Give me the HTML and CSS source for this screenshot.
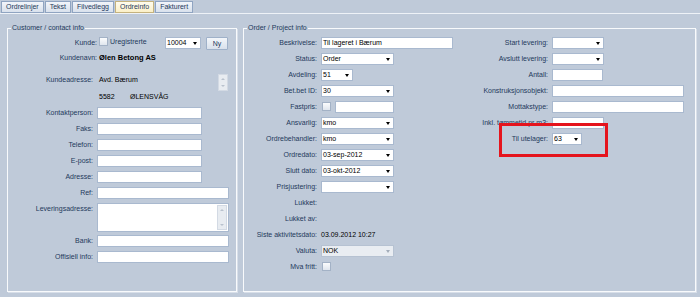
FILE: index.html
```html
<!DOCTYPE html>
<html lang="no">
<head>
    <meta charset="UTF-8">
    <title>Ordreinfo</title>
    <link rel="stylesheet" href="styles.css">
</head>
<body>

    <div class="tabs">
        <span class="tab">Ordrelinjer</span>
        <span class="tab">Tekst</span>
        <span class="tab">Filvedlegg</span>
        <span class="tab active">Ordreinfo</span>
        <span class="tab">Fakturert</span>
    </div>

    <div class="page">
        <!-- Kunde / kontakt -->
        <fieldset class="group customer">
            <legend>Customer / contact info</legend>

            <div class="row wide h15">
                <label>Kunde:</label>
                <span class="check-wrap"><span class="check"></span>Uregistrerte</span>
                <span class="input select w36">10004</span>
                <span class="btn">Ny</span>
            </div>
            <div class="row wide h22">
                <label>Kundenavn:</label>
                <span class="name">Ølen Betong AS</span>
            </div>
            <div class="row value-row h17">
                <label>Kundeadresse:</label>
                <span class="text w119">Avd. Bærum</span>
                <span class="vscroll"></span>
            </div>
            <div class="row value-row">
                <label></label>
                <span class="text w31">5582</span>
                <span class="text">ØLENSVÅG</span>
            </div>
            <div class="row"><label>Kontaktperson:</label><span class="input w105"></span></div>
            <div class="row"><label>Faks:</label><span class="input w105"></span></div>
            <div class="row"><label>Telefon:</label><span class="input w105"></span></div>
            <div class="row"><label>E-post:</label><span class="input w105"></span></div>
            <div class="row"><label>Adresse:</label><span class="input w105"></span></div>
            <div class="row"><label>Ref:</label><span class="input w132"></span></div>
            <div class="row h32">
                <label>Leveringsadresse:</label>
                <span class="input memo w132"><span class="vscroll"></span></span>
            </div>
            <div class="row"><label>Bank:</label><span class="input w132"></span></div>
            <div class="row"><label>Offisiell info:</label><span class="input w132"></span></div>
        </fieldset>

        <!-- Ordre / prosjekt -->
        <fieldset class="group order">
            <legend>Order / Project info</legend>

            <div class="cols">
                <div class="col1">
                    <div class="row"><label>Beskrivelse:</label><span class="input w132">Til lageret i Bærum</span></div>
                    <div class="row"><label>Status:</label><span class="input select w73">Order</span></div>
                    <div class="row"><label>Avdeling:</label><span class="input select w32">51</span></div>
                    <div class="row"><label>Bet.bet ID:</label><span class="input select w73">30</span></div>
                    <div class="row">
                        <label>Fastpris:</label>
                        <span class="check"></span>
                        <span class="input w59 after-check"></span>
                    </div>
                    <div class="row"><label>Ansvarlig:</label><span class="input select w73">kmo</span></div>
                    <div class="row"><label>Ordrebehandler:</label><span class="input select w73">kmo</span></div>
                    <div class="row"><label>Ordredato:</label><span class="input select w73">03-sep-2012</span></div>
                    <div class="row"><label>Slutt dato:</label><span class="input select w73">03-okt-2012</span></div>
                    <div class="row"><label>Prisjustering:</label><span class="input select w73"></span></div>
                    <div class="row"><label>Lukket:</label></div>
                    <div class="row"><label>Lukket av:</label></div>
                    <div class="row"><label>Siste aktivitetsdato:</label><span class="text">03.09.2012 10:27</span></div>
                    <div class="row"><label>Valuta:</label><span class="input select disabled w73">NOK</span></div>
                    <div class="row"><label>Mva fritt:</label><span class="check"></span></div>
                </div>

                <div class="col2">
                    <div class="row"><label>Start levering:</label><span class="input select w52"></span></div>
                    <div class="row"><label>Avslutt levering:</label><span class="input select w52"></span></div>
                    <div class="row"><label>Antall:</label><span class="input w51"></span></div>
                    <div class="row"><label>Konstruksjonsobjekt:</label><span class="input w132"></span></div>
                    <div class="row"><label>Mottakstype:</label><span class="input w132"></span></div>
                    <div class="row"><label>Inkl. tømmetid pr m3:</label><span class="input w52"></span></div>
                    <div class="row"><label>Til utelager:</label><span class="input select w30">63</span></div>
                </div>
            </div>
        </fieldset>
    </div>

    <!-- markering -->
    <div class="highlight"></div>

</body>
</html>
```

FILE: styles.css
```css
* {
    margin: 0;
    padding: 0;
    box-sizing: border-box;
}

body {
    font-family: "Liberation Sans", Arial, sans-serif;
    font-size: 7px;
    color: #000;
    background-color: #bfcad9;
    width: 700px;
    height: 297px;
    overflow: hidden;
}

/* Faner */
.tabs {
    display: flex;
    gap: 1px;
    height: 14px;
    padding: 1px 0 0 1px;
    border-bottom: 1px solid #eef2f7;
}

.tab {
    height: 12px;
    line-height: 10px;
    padding: 0 4px;
    border: 1px solid #8fa4c1;
    background: linear-gradient(#f2f5fa, #d9e1ec);
    color: #1e395b;
}

.tab.active {
    background: linear-gradient(#fffcee, #fbf0c8);
    border-color: #c4b27e;
}

.page {
    display: flex;
    gap: 6px;
    padding: 10px 0 0 7px;
}

/* Grupper */
.group {
    border: 1px solid #f8fafc;
    box-shadow: 1px 1px 0 #d8dfe9;
    height: 268px;
    padding: 3px 0 0 0;
    min-inline-size: 0;
}

.customer {
    width: 230px;
}

.order {
    width: 453px;
}

legend {
    margin-left: 3px;
    padding: 0 1px;
    line-height: 8px;
    color: #1e395b;
}

/* Rader */
.row {
    display: flex;
    align-items: flex-start;
    height: 16px;
    padding-top: 2px;
}

.row label {
    flex: none;
    width: 85px;
    margin-right: 4px;
    text-align: right;
    line-height: 12px;
    color: #1e395b;
    white-space: nowrap;
}

.row.wide label {
    width: 89px;
    margin-right: 2px;
}

.row.value-row label {
    margin-right: 6px;
}

.h15 { height: 15px; }
.h17 { height: 17px; }
.h22 { height: 22px; }
.h32 { height: 32px; }

.order .col1 {
    width: 235px;
    flex: none;
}

.order .col1 .row label {
    width: 73px;
}

.order .col2 .row label {
    width: 69px;
}

.cols {
    display: flex;
}

/* Felter */
.input {
    flex: none;
    display: block;
    height: 12px;
    line-height: 10px;
    padding-left: 1px;
    border: 1px solid #a9b9cf;
    background-color: #fff;
    white-space: nowrap;
    overflow: hidden;
}

.select {
    display: flex;
    align-items: center;
}

.select::after {
    content: '';
    margin-left: auto;
    margin-right: 3px;
    border-left: 2px solid transparent;
    border-right: 2px solid transparent;
    border-top: 3px solid #000;
}

.select.disabled {
    background-color: #e9edf2;
    border-color: #b6c2d2;
}

.select.disabled::after {
    border-top-color: #a3adba;
}

.memo {
    height: 29px;
    display: flex;
    justify-content: flex-end;
    padding: 1px;
}

.text {
    flex: none;
    line-height: 12px;
    white-space: nowrap;
}

.name {
    font-size: 7.5px;
    font-weight: bold;
    line-height: 12px;
    white-space: nowrap;
}

.w30 { width: 30px; }
.w31 { width: 31px; }
.w32 { width: 32px; }
.w36 { width: 36px; }
.w51 { width: 51px; }
.w52 { width: 52px; }
.w59 { width: 59px; }
.w73 { width: 73px; }
.w105 { width: 105px; }
.w119 { width: 119px; }
.w132 { width: 132px; }

.check-wrap {
    display: flex;
    gap: 2px;
    width: 66px;
    line-height: 10px;
    color: #1e395b;
}

.check {
    flex: none;
    width: 9px;
    height: 9px;
    border: 1px solid #a3b2c6;
    background: linear-gradient(#fbfcfd, #e0e6ee);
}

.order .check {
    margin-left: 1px;
    margin-top: 1px;
}

.after-check {
    margin-left: 4px;
}

.btn {
    flex: none;
    width: 22px;
    height: 13px;
    margin-left: 5px;
    line-height: 11px;
    text-align: center;
    color: #1e395b;
    border: 1px solid #9fb1c9;
    border-radius: 1px;
    background: linear-gradient(#f3f6fa, #d9e1ec);
}

/* Rullefelt */
.vscroll {
    flex: none;
    width: 10px;
    height: 17px;
    display: flex;
    flex-direction: column;
    align-items: center;
    justify-content: space-between;
    padding: 3px 0;
    background-color: #e8ecf1;
    border: 1px solid #d3dae4;
}

.memo .vscroll {
    height: 100%;
}

.vscroll::before {
    content: '';
    border-left: 2px solid transparent;
    border-right: 2px solid transparent;
    border-bottom: 2px solid #b9c2ce;
}

.vscroll::after {
    content: '';
    border-left: 2px solid transparent;
    border-right: 2px solid transparent;
    border-top: 2px solid #b9c2ce;
}

/* Rød markering over skjemaet */
.highlight {
    position: absolute;
    left: 499px;
    top: 123px;
    width: 109px;
    height: 34px;
    border: 3px solid #e5141d;
}
```
